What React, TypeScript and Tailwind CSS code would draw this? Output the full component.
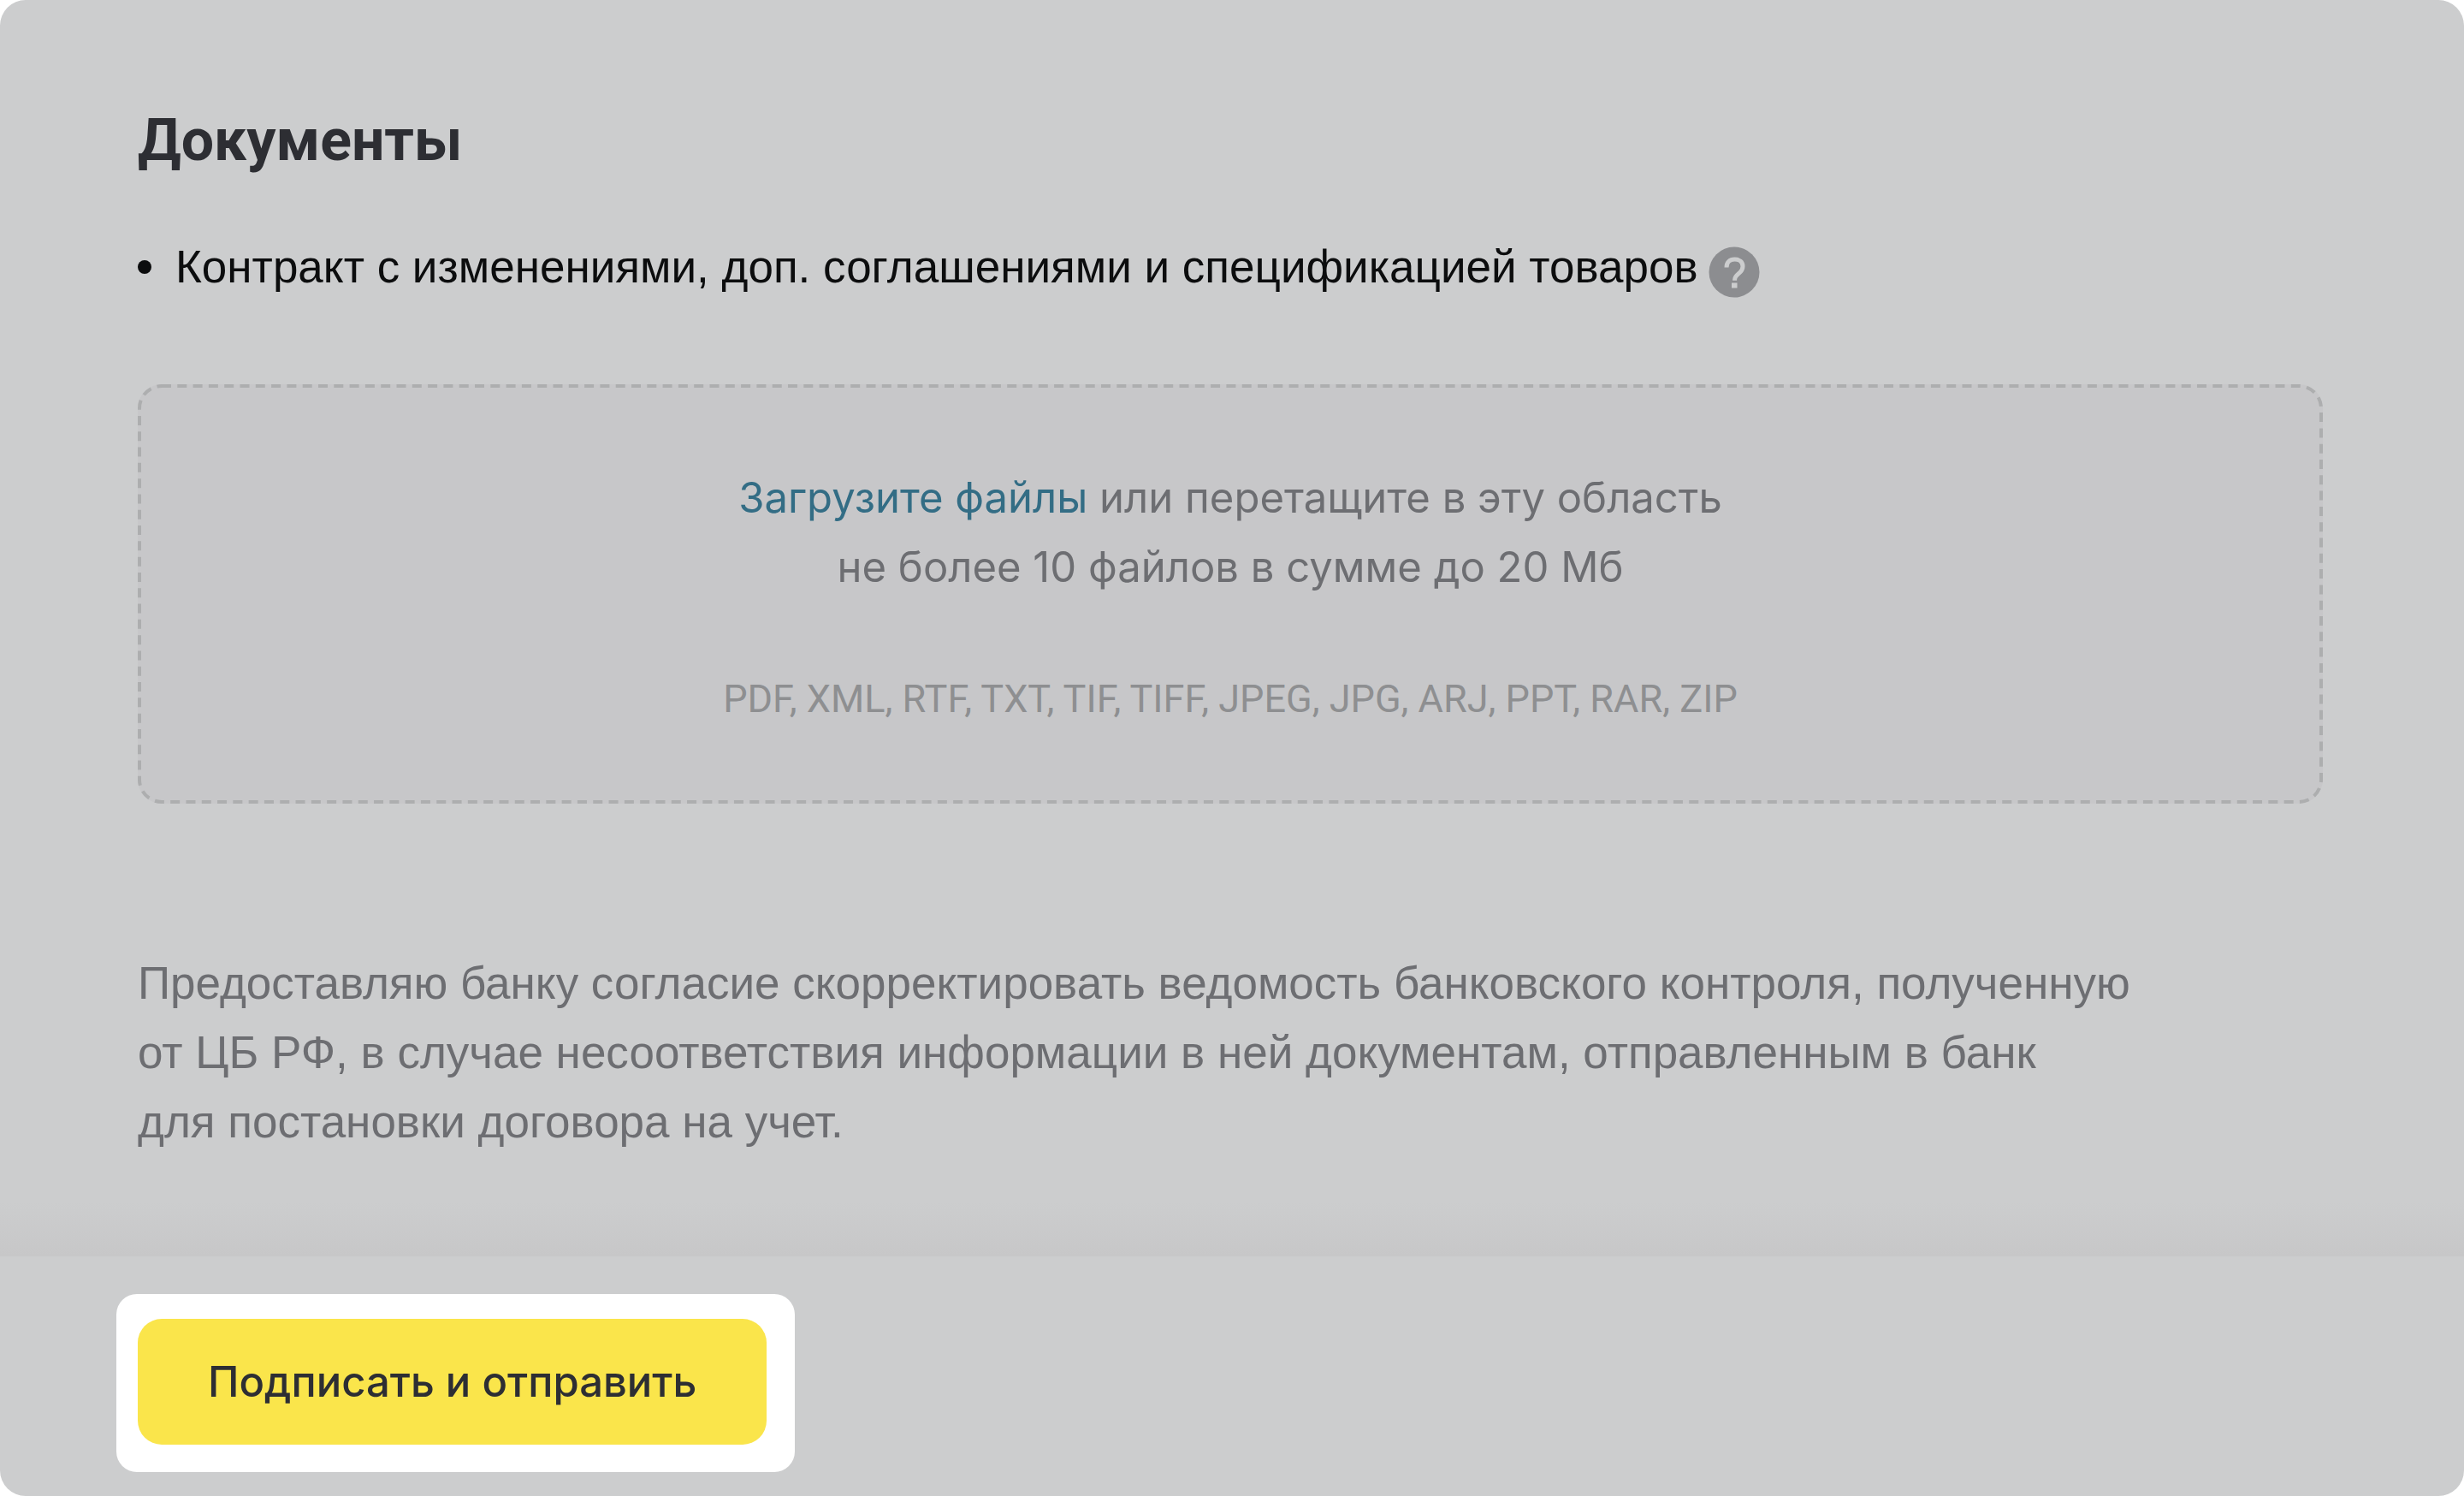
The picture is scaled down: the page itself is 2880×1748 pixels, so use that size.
import { useRef, useState } from "react";

const FORMATS = ["PDF", "XML", "RTF", "TXT", "TIF", "TIFF", "JPEG", "JPG", "ARJ", "PPT", "RAR", "ZIP"];

function HelpIcon() {
  return (
    <svg viewBox="0 0 60 60" className="size-15" fill="none" aria-hidden="true">
      <circle cx="30" cy="30" r="29.5" fill="#8c8d90" />
      <path
        d="M21 24.500C21 18.500 24.600 15 30.500 15c5.700 0 9.500 3.300 9.500 8.200 0 3.800-1.800 6-4.800 8.500-3.200 2.600-4.600 4.200-4.600 7v1"
        stroke="#cccdce"
        strokeWidth="5"
      />
      <rect x="27" y="42.500" width="6.500" height="6" fill="#cccdce" />
    </svg>
  );
}

function DropZone() {
  const inputRef = useRef<HTMLInputElement>(null);
  const [, setFiles] = useState<File[]>([]);

  return (
    <section
      className="relative mt-[97px] rounded-[28px] bg-[#c7c7c9] px-5 pt-[92px] pb-[82px] text-center font-['Inter',sans-serif]"
      onDragOver={(e) => e.preventDefault()}
      onDrop={(e) => {
        e.preventDefault();
        setFiles(Array.from(e.dataTransfer.files));
      }}
    >
      {/* dashed outline, CSS borders can't set the dash length */}
      <svg
        className="pointer-events-none absolute inset-[2px] size-[calc(100%-4px)] overflow-visible"
        fill="none"
        aria-hidden="true"
      >
        <rect width="100%" height="100%" rx="26" stroke="#adaeaf" strokeWidth="4" strokeDasharray="11 7.300" />
      </svg>
      <input
        ref={inputRef}
        type="file"
        multiple
        hidden
        aria-label="Загрузите файлы"
        onChange={(e) => setFiles(Array.from(e.target.files ?? []))}
      />
      <p className="text-[49px] leading-[81px] text-[#6d6e72]">
        <button type="button" className="cursor-pointer text-[#336d85]" onClick={() => inputRef.current?.click()}>
          Загрузите файлы
        </button>{" "}
        или перетащите в эту область
        <br />
        не более 10 файлов в сумме до 20 Мб
      </p>
      <p className="mt-[73px] font-['Roboto',sans-serif] text-[45px] leading-[81px] text-[#8e8f91]">
        {FORMATS.join(", ")}
      </p>
    </section>
  );
}

export default function App() {
  return (
    <div className="flex min-h-screen flex-col overflow-hidden rounded-[30px] bg-[#cccdce] font-['Liberation_Sans',sans-serif]">
      <main className="grow pt-[119px] pr-[165px] pb-13 pl-[161px]">
        <h1 className="font-['Roboto',sans-serif] text-[68px] leading-[90px] font-bold text-[#2d2e33]">Документы</h1>

        <ul className="mt-[62px]">
          <li className="flex items-center text-[53px] leading-[81px] text-[#0c0d0e]">
            <span className="mr-7 size-4 rounded-full bg-current" />
            Контракт с изменениями, доп. соглашениями и спецификацией товаров
            <button type="button" className="mt-3 ml-3 cursor-pointer" aria-label="Подсказка">
              <HelpIcon />
            </button>
          </li>
        </ul>

        <DropZone />

        <p className="mt-[169px] text-[53px] leading-[81px] text-[#6d6e72]">
          Предоставляю банку согласие скорректировать ведомость банковского контроля, полученную
          <br />
          от ЦБ РФ, в случае несоответствия информации в ней документам, отправленным в банк
          <br />
          для постановки договора на учет.
        </p>
      </main>

      <div className="h-16 bg-linear-to-b from-[#cccdce] to-[#c7c7c8]" />
      <footer className="px-[136px] pt-11 pb-7">
        <div className="w-fit rounded-3xl bg-white pt-[29px] pr-[33px] pb-8 pl-[25px]">
          <button
            type="submit"
            className="block cursor-pointer rounded-[28px] bg-[#fae54b] px-[82px] py-[33px] font-['Inter',sans-serif] text-[49px] leading-[81px] font-medium text-[#2d2e33]"
          >
            Подписать и отправить
          </button>
        </div>
      </footer>
    </div>
  );
}
